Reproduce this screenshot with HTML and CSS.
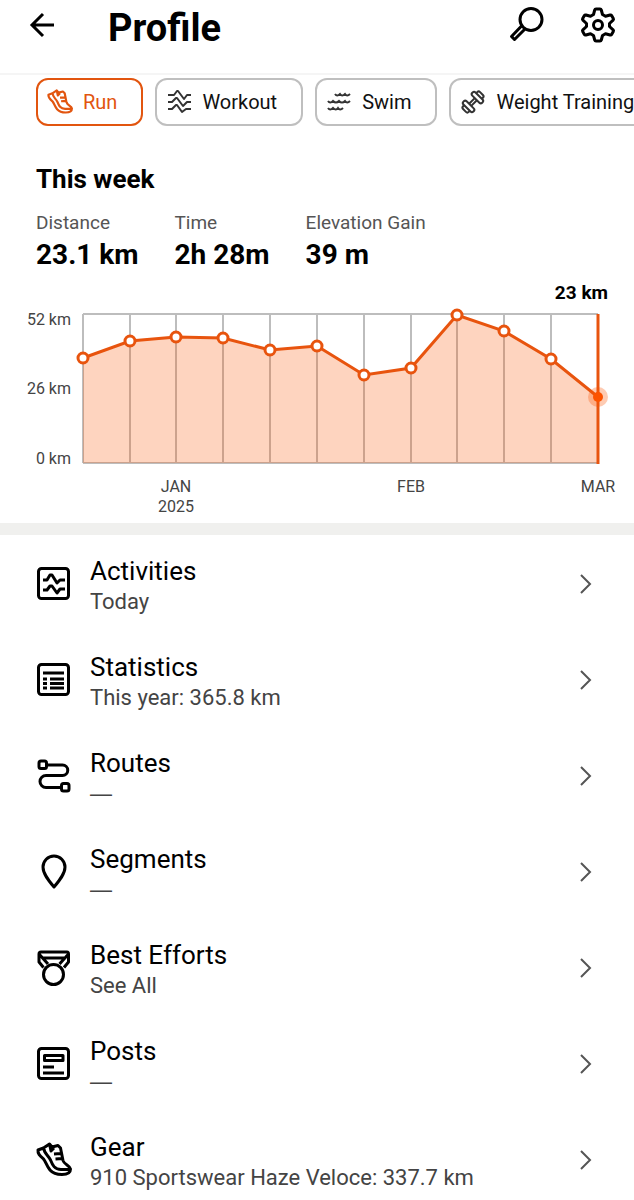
FILE: index.html
```html
<!DOCTYPE html>
<html lang="en">
  <head>
    <meta charset="UTF-8" />
    <meta name="viewport" content="width=device-width, initial-scale=1.0" />
    <title>Profile</title>
    <link rel="stylesheet" href="styles.css">
  </head>
  <body>
    <header class="topbar">
      <button class="icon-btn" type="button" aria-label="Back">
        <svg width="36" height="36" viewBox="0 0 36 36" fill="none" stroke="currentColor" stroke-width="3">
          <path d="M32 18H10M21 7 10 18l11 11" />
        </svg>
      </button>
      <h1>Profile</h1>
      <button class="icon-btn" type="button" aria-label="Search">
        <svg width="36" height="36" viewBox="0 0 36 36" fill="none" stroke="currentColor" stroke-width="3" stroke-linejoin="round">
          <circle cx="23" cy="12.500" r="11" />
          <path d="M14 18.500 3.500 29.500l3 3L17 22" />
        </svg>
      </button>
      <button class="icon-btn" type="button" aria-label="Settings">
        <svg width="36" height="36" viewBox="0 0 36 36" fill="none" stroke="currentColor" stroke-width="3" stroke-linejoin="round">
          <path d="M16 2h4q1 0 1.300 1l1.200 4.500 3 1.800 4.600-1.300q1-.3 1.500.6l1.700 3q.5.900-.2 1.600L29.500 16.500v3l3.600 3.300q.7.700.2 1.600l-1.700 3q-.5.900-1.500.6l-4.600-1.300-3 1.800L21.300 33q-.3 1-1.300 1h-4q-1 0-1.300-1l-1.200-4.500-3-1.800L5.900 28q-1 .3-1.500-.6l-1.700-3q-.5-.9.200-1.600l3.600-3.300v-3L2.900 13.200q-.7-.7-.2-1.600l1.700-3q.5-.9 1.500-.6l4.600 1.300 3-1.800L14.700 3q.3-1 1.300-1z" />
          <circle cx="18" cy="18" r="4.500" />
        </svg>
      </button>
    </header>

    <main class="content">
      <div class="chips">
        <button class="chip active" type="button">
          <svg width="26" height="26" viewBox="0 0 36 36" fill="none" stroke="currentColor" stroke-width="3" stroke-linejoin="round"><use href="#shoe" /></svg>
          Run
        </button>
        <button class="chip" type="button">
          <svg width="26" height="26" viewBox="0 0 26 26" fill="none" stroke="currentColor" stroke-width="2" stroke-linejoin="round">
            <path d="M2 6h6l3-4h1l6 8 3-4h4M2 13h4l4-4h1l6 8 4-4h4M2 20h4l4-4h1l5 7 4-3h5" />
          </svg>
          Workout
        </button>
        <button class="chip" type="button">
          <svg width="26" height="26" viewBox="0 0 26 26" fill="none" stroke="currentColor" stroke-width="2">
            <path d="M9 5q2 3 5 0 2 3 5 0 2 3 5 0M2 12q2 3 5 0 3 3 6 0 3 3 6 0 2 3 5 0M2 19q2 3 5 0 3 3 5 0 2 3 5 0" />
          </svg>
          Swim
        </button>
        <button class="chip" type="button">
          <svg width="26" height="26" viewBox="0 0 26 26" fill="none" stroke="currentColor" stroke-width="2" stroke-linejoin="round">
            <g transform="rotate(-45 13 13)">
              <path d="M9 11.500h8M9 14.500h8" />
              <rect x="17" y="6" width="4.500" height="14" rx="2" />
              <rect x="4.500" y="6" width="4.500" height="14" rx="2" />
              <path d="M21.500 9h1.500q2 0 2 2v4q0 2-2 2h-1.500M4.500 9H3q-2 0-2 2v4q0 2 2 2h1.500" />
            </g>
          </svg>
          Weight Training
        </button>
      </div>

      <section class="week">
        <h2>This week</h2>
        <dl class="stats">
          <div>
            <dt>Distance</dt>
            <dd>23.1 km</dd>
          </div>
          <div>
            <dt>Time</dt>
            <dd>2h 28m</dd>
          </div>
          <div>
            <dt>Elevation Gain</dt>
            <dd>39 m</dd>
          </div>
        </dl>
      </section>

      <svg class="chart" viewBox="0 0 634 243" role="img" aria-label="Weekly distance">
        <path class="grid" d="M83 34H598M83 183H598M83 34V183M130 34V183M176 34V183M223 34V183M270 34V183M317 34V183M364 34V183M411 34V183M457 34V183M504 34V183M551 34V183" />
        <path class="area" d="M83 78 130 61 176 57 223 58 270 70 317 66 364 95 411 88 457 35 504 51 551 79 598 117V183H83z" />
        <path class="line" d="M598 34V184" />
        <path class="line" d="M83 78 130 61 176 57 223 58 270 70 317 66 364 95 411 88 457 35 504 51 551 79 598 117" />
        <g class="dots">
          <circle cx="83" cy="78" r="5" />
          <circle cx="130" cy="61" r="5" />
          <circle cx="176" cy="57" r="5" />
          <circle cx="223" cy="58" r="5" />
          <circle cx="270" cy="70" r="5" />
          <circle cx="317" cy="66" r="5" />
          <circle cx="364" cy="95" r="5" />
          <circle cx="411" cy="88" r="5" />
          <circle cx="457" cy="35" r="5" />
          <circle cx="504" cy="51" r="5" />
          <circle cx="551" cy="79" r="5" />
        </g>
        <circle class="halo" cx="598" cy="117" r="10" />
        <circle class="now" cx="598" cy="117" r="5" />
        <text class="current" x="608" y="19">23 km</text>
        <g class="y-labels">
          <text x="71" y="45">52 km</text>
          <text x="71" y="114">26 km</text>
          <text x="71" y="184">0 km</text>
        </g>
        <g class="x-labels">
          <text x="176" y="212">JAN</text>
          <text x="176" y="232">2025</text>
          <text x="411" y="212">FEB</text>
          <text x="598" y="212">MAR</text>
        </g>
      </svg>

      <nav class="menu">
        <a class="row" href="#activities">
          <svg class="row-icon" viewBox="0 0 36 36">
            <rect x="2.500" y="2.500" width="30" height="30" rx="3" />
            <path d="M7 14h4l3-5h2l5 8 3-3h5M7 24h4l3-4h2l5 7 3-4h5" />
          </svg>
          <span class="row-text"><b>Activities</b><small>Today</small></span>
          <svg class="chevron" viewBox="0 0 12 20"><path d="M1 1 10 10 1 19" /></svg>
        </a>
        <a class="row" href="#statistics">
          <svg class="row-icon" viewBox="0 0 36 36">
            <rect x="2.500" y="2.500" width="30" height="30" rx="3" />
            <path d="M7 11H28M7 17h4M7 21.500h4M7 26h4M14 17H28M14 21.500H28M14 26H28" />
          </svg>
          <span class="row-text"><b>Statistics</b><small>This year: 365.8 km</small></span>
          <svg class="chevron" viewBox="0 0 12 20"><path d="M1 1 10 10 1 19" /></svg>
        </a>
        <a class="row" href="#routes">
          <svg class="row-icon" viewBox="0 0 36 36">
            <rect x="3" y="3" width="7.500" height="7.500" rx="2" />
            <rect x="25.500" y="25.500" width="7.500" height="7.500" rx="2" />
            <path d="M11 7H26.500a5.250 5.250 0 0 1 0 10.500H10a6 6 0 0 0 0 12H25" />
          </svg>
          <span class="row-text"><b>Routes</b><small class="empty">—</small></span>
          <svg class="chevron" viewBox="0 0 12 20"><path d="M1 1 10 10 1 19" /></svg>
        </a>
        <a class="row" href="#segments">
          <svg class="row-icon" viewBox="0 0 36 36">
            <path d="M18 33C13 27 7 20 7 13a11 11 0 0 1 22 0c0 7-6 14-11 20z" />
          </svg>
          <span class="row-text"><b>Segments</b><small class="empty">—</small></span>
          <svg class="chevron" viewBox="0 0 12 20"><path d="M1 1 10 10 1 19" /></svg>
        </a>
        <a class="row" href="#best-efforts">
          <svg class="row-icon" viewBox="0 0 36 36">
            <path d="M5 2H31q1.500 0 1.500 2V12L28 17.500M5 2Q3 2 3 4V12L7.500 17.500M3 4 12 14M32.500 4 23.500 14M7 8H28" />
            <circle cx="17.500" cy="24.500" r="10" />
          </svg>
          <span class="row-text"><b>Best Efforts</b><small>See All</small></span>
          <svg class="chevron" viewBox="0 0 12 20"><path d="M1 1 10 10 1 19" /></svg>
        </a>
        <a class="row" href="#posts">
          <svg class="row-icon" viewBox="0 0 36 36">
            <rect x="2.500" y="2.500" width="30" height="30" rx="3" />
            <path d="M8.500 9.500H27V14.500H8.500zM7 21H18M7 27H28" />
          </svg>
          <span class="row-text"><b>Posts</b><small class="empty">—</small></span>
          <svg class="chevron" viewBox="0 0 12 20"><path d="M1 1 10 10 1 19" /></svg>
        </a>
        <a class="row" href="#gear">
          <svg class="row-icon" viewBox="0 0 36 36">
            <path id="shoe" d="M2 8 7.500 6 13.500 2 16 5l6-1.500 2.500 2.500 2.500 12.500c1 4 7 5 7.500 8.500 0 4-3 5.500-8.500 5.500-6 0-9-1-12-4.500C10 23 10 20 7.500 17 4 14 1.500 12 2 8zM8 7c0 4 4 6 6.500 11 2 5 4 9.500 10.500 9.500h9M13.500 2l1.500 7 3-3M18 12l7-.5M19.500 17l7-.5" />
          </svg>
          <span class="row-text"><b>Gear</b><small>910 Sportswear Haze Veloce: 337.7 km</small></span>
          <svg class="chevron" viewBox="0 0 12 20"><path d="M1 1 10 10 1 19" /></svg>
        </a>
      </nav>
    </main>
  </body>
</html>
```
FILE: styles.css
```css
* {
  box-sizing: border-box;
}

body {
  margin: 0;
  height: 100vh;
  display: flex;
  flex-direction: column;
  font-family: Roboto, "Liberation Sans", sans-serif;
  background: #fff;
  color: #000;
}

button {
  font: inherit;
  cursor: pointer;
}

/* header */
.topbar {
  display: flex;
  align-items: flex-start;
  flex: none;
  height: 75px;
  padding: 7px 18px 0 22px;
  border-bottom: 2px solid #f5f5f5;
}

.topbar h1 {
  flex: 1;
  margin: 0 0 0 50px;
  font-size: 38px;
  line-height: 42px;
  font-weight: 700;
}

.icon-btn {
  display: flex;
  padding: 0;
  border: 0;
  background: none;
  color: #000;
}

.icon-btn + .icon-btn {
  margin-left: 36px;
}

.content {
  flex: 1;
  min-height: 0;
  overflow-y: auto;
  scrollbar-width: none;
}

/* sport filter */
.chips {
  display: flex;
  gap: 12px;
  padding: 3px 0 0 36px;
  overflow-x: auto;
  scrollbar-width: none;
}

.chip {
  display: flex;
  align-items: center;
  flex: none;
  gap: 10px;
  height: 48px;
  padding: 0 24px 0 9px;
  border: 2px solid #bfbfbf;
  border-radius: 12px;
  background: #fff;
  color: #111;
  font-size: 20px;
  white-space: nowrap;
}

.chip svg {
  color: #333;
}

.chip.active,
.chip.active svg {
  border-color: #e2550f;
  color: #e2550f;
}

/* weekly totals */
.week {
  padding: 37px 36px 0;
}

.week h2 {
  margin: 0;
  font-size: 26px;
  line-height: 32px;
  font-weight: 700;
}

.stats {
  display: flex;
  gap: 36px;
  margin: 15px 0 0;
}

.stats dt {
  font-size: 19px;
  line-height: 26px;
  color: #555;
}

.stats dd {
  margin: 0;
  font-size: 28px;
  line-height: 38px;
  font-weight: 700;
}

/* chart */
.chart {
  display: block;
  width: 100%;
  margin-top: 6px;
}

.grid {
  fill: none;
  stroke: #bdbdbd;
  stroke-width: 2;
}

.area {
  fill: #fc5200;
  opacity: 0.25;
}

.line {
  fill: none;
  stroke: #e8540e;
  stroke-width: 3;
}

.dots {
  fill: #fff;
  stroke: #e8540e;
  stroke-width: 3;
}

.halo {
  fill: #fc5200;
  opacity: 0.3;
}

.now {
  fill: #fc5200;
}

.current {
  font-size: 19px;
  font-weight: 700;
  text-anchor: end;
}

.y-labels,
.x-labels {
  font-size: 16px;
  fill: #444;
}

.y-labels {
  text-anchor: end;
}

.x-labels {
  text-anchor: middle;
}

/* menu */
.menu {
  border-top: 12px solid #f0f0ee;
  padding-top: 1px;
}

.row {
  display: flex;
  align-items: center;
  height: 96px;
  padding: 0 42px 0 36px;
  color: #000;
  text-decoration: none;
}

.row-icon {
  width: 36px;
  height: 36px;
  flex: none;
  fill: none;
  stroke: #000;
  stroke-width: 3;
  stroke-linejoin: round;
}

.row-text {
  flex: 1;
  display: flex;
  flex-direction: column;
  margin-left: 18px;
  padding-top: 4px;
}

.row-text b {
  font-size: 26px;
  line-height: 32px;
  font-weight: 400;
}

.row-text small {
  font-size: 22px;
  line-height: 30px;
  color: #444;
}

.row-text .empty {
  font-family: "Liberation Sans", sans-serif;
}

.chevron {
  width: 12px;
  height: 20px;
  fill: none;
  stroke: #555;
  stroke-width: 2;
}
```
